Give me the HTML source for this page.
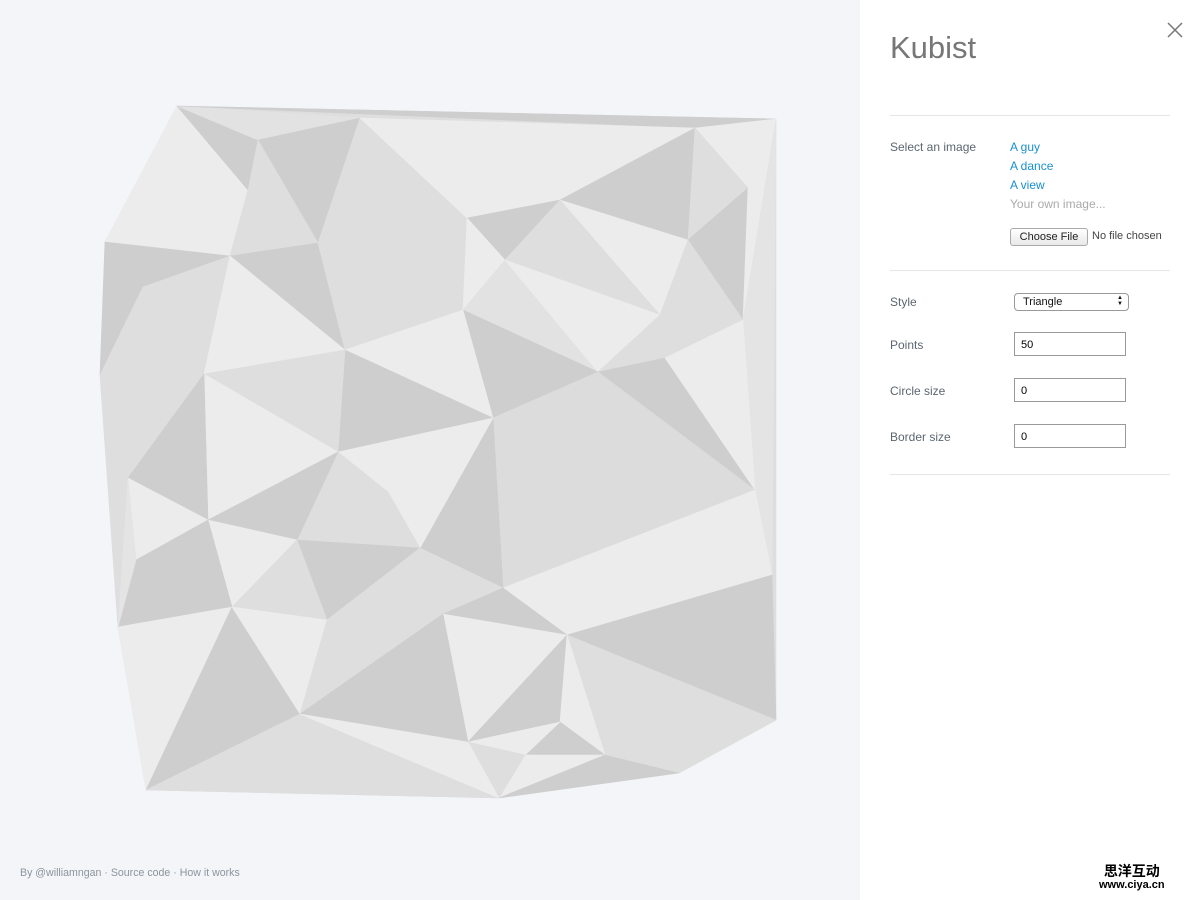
<!DOCTYPE html>
<html><head><meta charset="utf-8"><style>
body{margin:0;width:1200px;height:900px;overflow:hidden;font-family:"Liberation Sans",sans-serif;background:#f3f5f8;position:relative}
#side{position:absolute;left:860px;top:0;width:340px;height:900px;background:#fff}
h1{position:absolute;left:30px;top:30px;margin:0;font-weight:300;font-size:31px;color:#777;letter-spacing:0}
.close{position:absolute;left:307px;top:22px}
.hr{position:absolute;left:30px;width:280px;height:1px;background:#e6e6e6}
.lbl{position:absolute;left:30px;font-size:12px;color:#5c6670}
.lk{position:absolute;left:150px;font-size:12px;color:#1a8fd0}
.inp{position:absolute;left:154px;width:112px;height:24px;border:1px solid #999;box-sizing:border-box;font-size:11px;padding:6px 0 0 6px;color:#000}
#foot{position:absolute;left:20px;top:867px;font-size:10.6px;color:#8c959e}
</style></head><body>
<svg width="860" height="900" style="position:absolute;left:0;top:0">
<g stroke-width="0.6" stroke-linejoin="round">
<polygon points="177,106 776,119 776,720 679,773 499,798 146,790 118,627 100,375 105,242" fill="#dedede" stroke="#dedede"/>
<polygon points="177,106 105,242 230,256 248,190" fill="#ececec" stroke="#ececec"/>
<polygon points="177,106 258,140 248,190" fill="#cecece" stroke="#cecece"/>
<polygon points="177,106 360,118 258,140" fill="#e2e2e2" stroke="#e2e2e2"/>
<polygon points="258,140 360,118 318,243" fill="#cecece" stroke="#cecece"/>
<polygon points="258,140 318,243 230,256 248,190" fill="#dedede" stroke="#dedede"/>
<polygon points="360,118 467,218 318,243" fill="#dedede" stroke="#dedede"/>
<polygon points="177,106 695,128 776,119" fill="#cecece" stroke="#cecece"/>
<polygon points="360,118 695,128 560,200 467,218" fill="#ececec" stroke="#ececec"/>
<polygon points="560,200 695,128 688,240" fill="#cecece" stroke="#cecece"/>
<polygon points="467,218 560,200 505,260" fill="#cecece" stroke="#cecece"/>
<polygon points="560,200 688,240 660,315" fill="#ececec" stroke="#ececec"/>
<polygon points="505,260 560,200 660,315" fill="#dedede" stroke="#dedede"/>
<polygon points="695,128 776,119 748,188" fill="#ececec" stroke="#ececec"/>
<polygon points="695,128 748,188 688,240" fill="#dedede" stroke="#dedede"/>
<polygon points="688,240 748,188 743,320" fill="#cecece" stroke="#cecece"/>
<polygon points="776,119 743,320 748,188" fill="#ececec" stroke="#ececec"/>
<polygon points="776,119 772,575 755,490 743,320" fill="#e4e4e4" stroke="#e4e4e4"/>
<polygon points="105,242 230,256 143,287" fill="#cecece" stroke="#cecece"/>
<polygon points="105,242 143,287 100,375" fill="#cecece" stroke="#cecece"/>
<polygon points="143,287 230,256 204,374 100,375" fill="#dedede" stroke="#dedede"/>
<polygon points="230,256 318,243 345,350" fill="#cecece" stroke="#cecece"/>
<polygon points="230,256 345,350 204,374" fill="#ececec" stroke="#ececec"/>
<polygon points="318,243 467,218 463,310 345,350" fill="#dedede" stroke="#dedede"/>
<polygon points="467,218 505,260 463,310" fill="#ececec" stroke="#ececec"/>
<polygon points="463,310 505,260 598,372" fill="#e2e2e2" stroke="#e2e2e2"/>
<polygon points="505,260 660,315 598,372" fill="#ececec" stroke="#ececec"/>
<polygon points="660,315 688,240 743,320 665,358 598,372" fill="#dedede" stroke="#dedede"/>
<polygon points="463,310 598,372 493,418" fill="#cecece" stroke="#cecece"/>
<polygon points="345,350 463,310 493,418" fill="#ececec" stroke="#ececec"/>
<polygon points="345,350 493,418 338,452" fill="#cecece" stroke="#cecece"/>
<polygon points="204,374 345,350 338,452" fill="#dedede" stroke="#dedede"/>
<polygon points="204,374 338,452 208,520" fill="#ececec" stroke="#ececec"/>
<polygon points="100,375 204,374 128,478" fill="#dedede" stroke="#dedede"/>
<polygon points="204,374 128,478 208,520" fill="#cecece" stroke="#cecece"/>
<polygon points="100,375 128,478 118,627" fill="#dedede" stroke="#dedede"/>
<polygon points="598,372 665,358 755,490" fill="#cecece" stroke="#cecece"/>
<polygon points="665,358 743,320 755,490" fill="#ececec" stroke="#ececec"/>
<polygon points="493,418 598,372 755,490 503,588" fill="#dcdcdc" stroke="#dcdcdc"/>
<polygon points="503,588 755,490 772,575 567,635" fill="#ececec" stroke="#ececec"/>
<polygon points="493,418 503,588 420,548" fill="#cecece" stroke="#cecece"/>
<polygon points="338,452 493,418 420,548 388,492" fill="#ececec" stroke="#ececec"/>
<polygon points="338,452 388,492 420,548 297,540" fill="#dedede" stroke="#dedede"/>
<polygon points="208,520 338,452 297,540" fill="#cecece" stroke="#cecece"/>
<polygon points="208,520 297,540 232,607" fill="#ececec" stroke="#ececec"/>
<polygon points="128,478 208,520 136,560" fill="#ececec" stroke="#ececec"/>
<polygon points="136,560 208,520 232,607 118,627" fill="#cecece" stroke="#cecece"/>
<polygon points="128,478 136,560 118,627" fill="#e4e4e4" stroke="#e4e4e4"/>
<polygon points="297,540 420,548 327,620" fill="#cecece" stroke="#cecece"/>
<polygon points="232,607 297,540 327,620" fill="#dedede" stroke="#dedede"/>
<polygon points="420,548 503,588 443,614 327,620" fill="#dedede" stroke="#dedede"/>
<polygon points="503,588 567,635 443,614" fill="#cecece" stroke="#cecece"/>
<polygon points="567,635 772,575 776,720" fill="#cecece" stroke="#cecece"/>
<polygon points="567,635 776,720 679,773 605,755" fill="#dedede" stroke="#dedede"/>
<polygon points="443,614 567,635 560,722 468,742" fill="#ececec" stroke="#ececec"/>
<polygon points="567,635 560,722 468,742" fill="#cecece" stroke="#cecece"/>
<polygon points="567,635 605,755 560,722" fill="#ececec" stroke="#ececec"/>
<polygon points="560,722 605,755 525,755" fill="#cecece" stroke="#cecece"/>
<polygon points="468,742 560,722 525,755" fill="#ececec" stroke="#ececec"/>
<polygon points="525,755 605,755 679,773 499,798" fill="#ececec" stroke="#ececec"/>
<polygon points="605,755 679,773 499,798" fill="#cecece" stroke="#cecece"/>
<polygon points="468,742 525,755 499,798" fill="#dedede" stroke="#dedede"/>
<polygon points="118,627 232,607 146,790" fill="#ececec" stroke="#ececec"/>
<polygon points="232,607 300,714 146,790" fill="#cecece" stroke="#cecece"/>
<polygon points="232,607 327,620 300,714" fill="#ececec" stroke="#ececec"/>
<polygon points="327,620 443,614 300,714" fill="#dedede" stroke="#dedede"/>
<polygon points="300,714 443,614 468,742" fill="#cecece" stroke="#cecece"/>
<polygon points="146,790 300,714 499,798" fill="#dedede" stroke="#dedede"/>
<polygon points="300,714 468,742 499,798" fill="#ececec" stroke="#ececec"/>
</g></svg>
<div id="foot">By @williamngan · Source code · How it works</div>
<div id="side">
<h1>Kubist</h1>
<svg class="close" width="16" height="16"><path d="M1 1L15 15M15 1L1 15" stroke="#777" stroke-width="1.5"/></svg>
<div class="hr" style="top:115px"></div>
<div class="lbl" style="top:140px">Select an image</div>
<div class="lk" style="top:140px">A guy</div>
<div class="lk" style="top:159px">A dance</div>
<div class="lk" style="top:178px">A view</div>
<div class="lk" style="top:197px;color:#aaa">Your own image...</div>
<div style="position:absolute;left:150px;top:228px;width:76px;height:16px;border:1px solid #aaa;border-radius:3px;background:linear-gradient(#fff,#e8e8e8);font-size:11px;text-align:center;line-height:16px;color:#222">Choose File</div>
<div style="position:absolute;left:232px;top:230px;font-size:11px;color:#444">No file chosen</div>
<div class="hr" style="top:270px"></div>
<div class="lbl" style="top:295px">Style</div>
<div style="position:absolute;left:154px;top:293px;width:105px;height:16px;border:1px solid #999;border-radius:4px;font-size:11px;line-height:16px;padding-left:8px;color:#111">Triangle<span style="position:absolute;right:5px;top:1px;font-size:6px;line-height:6px">&#9650;<br>&#9660;</span></div>
<div class="lbl" style="top:338px">Points</div><div class="inp" style="top:332px">50</div>
<div class="lbl" style="top:384px">Circle size</div><div class="inp" style="top:378px">0</div>
<div class="lbl" style="top:430px">Border size</div><div class="inp" style="top:424px">0</div>
<div class="hr" style="top:474px"></div>
<div style="position:absolute;left:239px;top:864px;font-family:'Noto Sans CJK SC',sans-serif;font-size:14px;font-weight:bold;color:#000;line-height:15px;text-align:center">思洋互动<div style="font-family:'Liberation Sans',sans-serif;font-size:11px;line-height:12px">www.ciya.cn</div></div>
</div>
</body></html>
